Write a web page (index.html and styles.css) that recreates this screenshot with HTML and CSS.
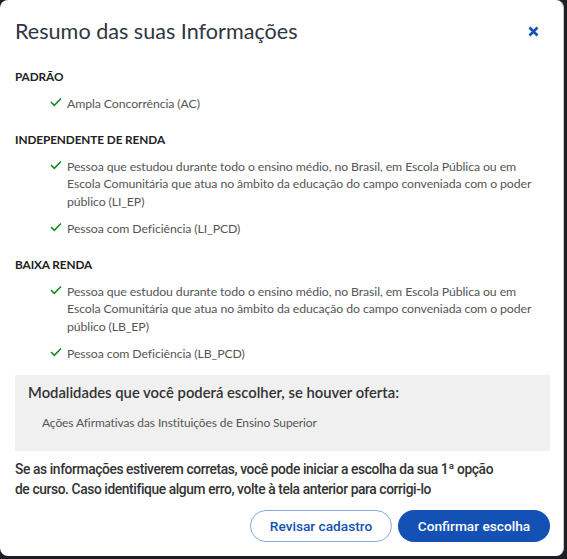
FILE: index.html
```html
<!DOCTYPE html>
<html lang="pt-BR">
<head>
<meta charset="utf-8">
<title>Resumo das suas Informações</title>
<link rel="stylesheet" href="styles.css">
</head>
<body>
<div class="modal">
  <header class="modal-header">
    <h1 class="title">Resumo das suas Informações</h1>
    <button class="close" aria-label="Fechar">
      <svg width="11" height="11" viewBox="0 0 11 11"><path d="M1.5 1.5 L9.5 9.5 M9.5 1.5 L1.5 9.5" stroke="#1351b4" stroke-width="2.6" stroke-linecap="butt"/></svg>
    </button>
  </header>

  <section class="group">
    <h2 class="group-title">PADRÃO</h2>
    <ul class="items">
      <li class="item"><svg class="check" viewBox="0 0 12 10"><path d="M1 5 L4.3 8.3 L11 1.5" fill="none" stroke="#168821" stroke-width="1.6"/></svg><span>Ampla Concorrência (AC)</span></li>
    </ul>
  </section>

  <section class="group">
    <h2 class="group-title">INDEPENDENTE DE RENDA</h2>
    <ul class="items">
      <li class="item"><svg class="check" viewBox="0 0 12 10"><path d="M1 5 L4.3 8.3 L11 1.5" fill="none" stroke="#168821" stroke-width="1.6"/></svg><span>Pessoa que estudou durante todo o ensino médio, no Brasil, em Escola Pública ou em Escola Comunitária que atua no âmbito da educação do campo conveniada com o poder público (LI_EP)</span></li>
      <li class="item"><svg class="check" viewBox="0 0 12 10"><path d="M1 5 L4.3 8.3 L11 1.5" fill="none" stroke="#168821" stroke-width="1.6"/></svg><span>Pessoa com Deficiência (LI_PCD)</span></li>
    </ul>
  </section>

  <section class="group">
    <h2 class="group-title">BAIXA RENDA</h2>
    <ul class="items">
      <li class="item"><svg class="check" viewBox="0 0 12 10"><path d="M1 5 L4.3 8.3 L11 1.5" fill="none" stroke="#168821" stroke-width="1.6"/></svg><span>Pessoa que estudou durante todo o ensino médio, no Brasil, em Escola Pública ou em Escola Comunitária que atua no âmbito da educação do campo conveniada com o poder público (LB_EP)</span></li>
      <li class="item"><svg class="check" viewBox="0 0 12 10"><path d="M1 5 L4.3 8.3 L11 1.5" fill="none" stroke="#168821" stroke-width="1.6"/></svg><span>Pessoa com Deficiência (LB_PCD)</span></li>
    </ul>
  </section>

  <div class="info-box">
    <p class="info-title">Modalidades que você poderá escolher, se houver oferta:</p>
    <p class="info-text">Ações Afirmativas das Instituições de Ensino Superior</p>
  </div>

  <p class="notice">Se as informações estiverem corretas, você pode iniciar a escolha da sua 1ª opção de curso. Caso identifique algum erro, volte à tela anterior para corrigi-lo</p>

  <div class="actions">
    <button class="btn btn-secondary">Revisar cadastro</button>
    <button class="btn btn-primary">Confirmar escolha</button>
  </div>
</div>
</body>
</html>
```

FILE: styles.css
```css
* { box-sizing: border-box; }
html, body { margin: 0; padding: 0; }
body {
  background: #1b1f24;
  width: 567px;
  height: 559px;
  overflow: hidden;
  font-family: Lato, "Open Sans", sans-serif;
}
.modal {
  width: 564px;
  height: 556px;
  background: #fff;
  border-radius: 8px;
  border-right: 1px solid #c8c8c8;
  padding: 0 13px 0 15px;
  display: flex;
  flex-direction: column;
}
.modal-header {
  display: flex;
  justify-content: space-between;
  align-items: center;
  height: 67px;
  padding-bottom: 5px;
}
.title {
  margin: 0;
  font-size: 21.6px;
  font-weight: 400;
  color: #2f3642;
}
.close {
  border: 0;
  background: none;
  padding: 0;
  margin-right: 11px;
  width: 11px;
  height: 11px;
  display: flex;
}
.group { margin-bottom: 7px; }
.group:last-of-type { margin-bottom: 2px; }
.group-title {
  margin: 0;
  font-size: 11.8px;
  letter-spacing: -0.1px;
  font-weight: 700;
  color: #222;
  line-height: 20px;
}
.items {
  list-style: none;
  margin: 0;
  padding: 8px 0 0 35px;
}
.item {
  display: flex;
  gap: 5px;
  font-size: 12.3px;
  letter-spacing: -0.1px;
  line-height: 17.5px;
  color: #555;
  margin-bottom: 10px;
}
.item span { width: 465px; }
.check {
  width: 12px;
  height: 10px;
  flex-shrink: 0;
  margin-top: 2px;
}
.info-box {
  background: #f0f0f0;
  padding: 7px 13px 11px 13px;
}
.info-title {
  margin: 0;
  font-size: 14.8px;
  font-weight: 600;
  color: #333;
  line-height: 20px;
}
.info-text {
  margin: 13px 0 10px 14px;
  font-size: 12px;
  letter-spacing: -0.1px;
  color: #555;
}
.notice {
  margin: 8px 0 0;
  max-width: 488px;
  font-family: Roboto, sans-serif;
  font-size: 13.8px;
  letter-spacing: -0.4px;
  font-weight: 500;
  line-height: 20px;
  color: #333;
}
.actions {
  display: flex;
  justify-content: flex-end;
  gap: 6px;
  margin-top: 11px;
}
.btn {
  height: 32px;
  border-radius: 16px;
  font-family: Roboto, sans-serif;
  font-size: 13.7px;
  font-weight: 500;
  padding: 0;
  cursor: pointer;
}
.btn-secondary {
  background: #fff;
  color: #1351b4;
  border: 1px solid #8aa9dc;
  width: 142px;
}
.btn-primary {
  background: #1351b4;
  color: #fff;
  border: 0;
  width: 152px;
}
```
